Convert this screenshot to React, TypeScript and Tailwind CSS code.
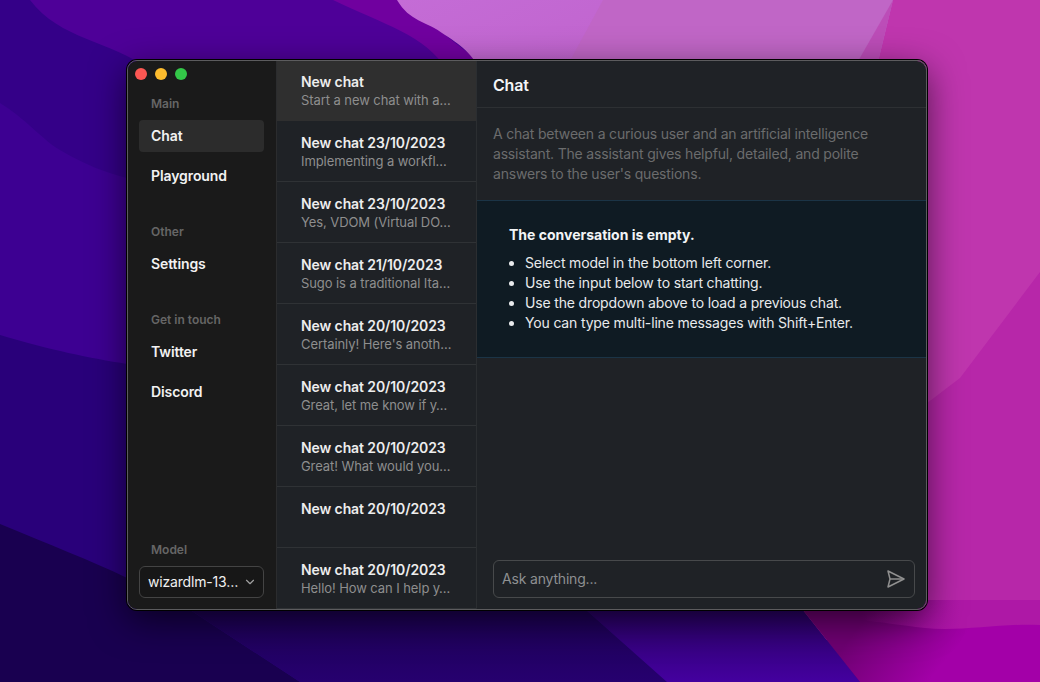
import { ChevronDown } from "lucide-react";

const chats = [
  { title: "New chat", sub: "Start a new chat with a…" },
  { title: "New chat 23/10/2023", sub: "Implementing a workfl…" },
  { title: "New chat 23/10/2023", sub: "Yes, VDOM (Virtual DO…" },
  { title: "New chat 21/10/2023", sub: "Sugo is a traditional Ita…" },
  { title: "New chat 20/10/2023", sub: "Certainly! Here's anoth…" },
  { title: "New chat 20/10/2023", sub: "Great, let me know if y…" },
  { title: "New chat 20/10/2023", sub: "Great! What would you…" },
  { title: "New chat 20/10/2023", sub: "" },
  { title: "New chat 20/10/2023", sub: "Hello! How can I help y…" },
];

const tips = [
  "Select model in the bottom left corner.",
  "Use the input below to start chatting.",
  "Use the dropdown above to load a previous chat.",
  "You can type multi-line messages with Shift+Enter.",
];

const Wallpaper = () => (
  <svg className="absolute inset-0 w-full h-full" viewBox="0 0 1040 682" preserveAspectRatio="none">
    <defs>
      <linearGradient id="pink" x1="0" y1="0" x2="1" y2="1">
        <stop offset="0" stopColor="#c46cd6" />
        <stop offset="1" stopColor="#b84fb8" />
      </linearGradient>
      <linearGradient id="bluebottom" x1="0" y1="0" x2="0" y2="1">
        <stop offset="0" stopColor="#1c0052" />
        <stop offset="1" stopColor="#26006f" />
      </linearGradient>
      <linearGradient id="violet" x1="0" y1="0" x2="0" y2="1">
        <stop offset="0" stopColor="#26005f" />
        <stop offset="1" stopColor="#44009f" />
      </linearGradient>
      <linearGradient id="corner" gradientUnits="userSpaceOnUse" x1="860" y1="625" x2="930" y2="680">
        <stop offset="0" stopColor="#6e0072" />
        <stop offset="1" stopColor="#a300a8" />
      </linearGradient>
      <linearGradient id="patch" gradientUnits="userSpaceOnUse" x1="860" y1="0" x2="960" y2="0">
        <stop offset="0" stopColor="#ae18a6" stopOpacity="0" />
        <stop offset="1" stopColor="#ae18a6" />
      </linearGradient>
    </defs>
    <rect width="1040" height="682" fill="#340088" />
    <path d="M0 0H1040V400H0V103C25 118 45 142 60 150C85 165 105 172 127 178C300 200 500 200 600 100L440 0Z" fill="#3d0092" />
    <path d="M30 0H500V70H150C110 40 60 40 30 0Z" fill="#4e0098" />
    <path d="M333 0H400L490 70H447C425 35 385 25 333 0Z" fill="#70009f" />
    <path d="M397 0C410 22 425 20 445 35C465 48 472 55 480 70V300H1040V0Z" fill="url(#pink)" />
    <path d="M603 0H893L875 70H565Z" fill="#c066c6" />
    <path d="M893 0H1040V640H860V70H876Z" fill="#bf36ae" />
    <path d="M893 0L853 70H876Z" fill="#bc4db8" />
    <path d="M1040 272L960 378L800 500V640H1040Z" fill="#b727a9" />
    <path d="M0 335C50 350 90 358 127 364H800V682H0Z" fill="#29007a" />
    <path d="M0 524C50 545 90 560 127 578L175 600L300 682H0Z" fill="#190050" />
    <path d="M175 600H575L667 682H300Z" fill="url(#bluebottom)" />
    <path d="M575 600H795L860 682H667Z" fill="url(#violet)" />
    <path d="M795 600H1040V682H860Z" fill="url(#corner)" />
    <path d="M860 600H1040V625C1000 623 960 632 925 628C900 625 880 622 860 620Z" fill="url(#patch)" />
  </svg>
);

const SectionTitle = ({ label }: { label: string }) => (
  <div className="h-4 pt-px px-3 mb-[9px] text-xs leading-4 font-semibold text-[#666666]">{label}</div>
);

const NavItem = ({ label, active }: { label: string; active?: boolean }) => (
  <div className={`h-8 px-3 rounded flex items-center text-sm font-semibold tracking-[-0.1px] text-[#f2f2f2] ${active ? "bg-[#2c2c2c]" : ""}`}>
    {label}
  </div>
);

const Sidebar = () => (
  <div className="w-[149px] shrink-0 flex flex-col bg-[#1a1a1a] border-r border-[#2b2c2e] pl-[11px] pr-3 pb-[11px]">
    <div className="h-[34px] flex items-start gap-2 pt-[7px] -ml-1">
      <div className="w-3 h-3 rounded-full bg-[#fc5753]" />
      <div className="w-3 h-3 rounded-full bg-[#fdbc2e]" />
      <div className="w-3 h-3 rounded-full bg-[#33c748]" />
    </div>
    <SectionTitle label="Main" />
    <div className="flex flex-col gap-2 mb-[31px]">
      <NavItem label="Chat" active />
      <NavItem label="Playground" />
    </div>
    <SectionTitle label="Other" />
    <div className="flex flex-col gap-2 mb-[31px]">
      <NavItem label="Settings" />
    </div>
    <SectionTitle label="Get in touch" />
    <div className="flex flex-col gap-2">
      <NavItem label="Twitter" />
      <NavItem label="Discord" />
    </div>
    <div className="mt-auto">
      <SectionTitle label="Model" />
      <div className="h-8 rounded-md border border-[#444444] bg-[#171717] flex items-center pl-2 pr-[6px] text-sm tracking-[-0.18px] text-[#f0f0f0]">
        <span className="flex-1 whitespace-nowrap">wizardlm-13…</span>
        <ChevronDown size={14} className="text-[#a0a0a0]" />
      </div>
    </div>
  </div>
);

const ChatList = () => (
  <div className="w-[200px] shrink-0 flex flex-col overflow-hidden bg-[#1f2226] border-r border-[#2b2e31]">
    {chats.map((c, i) => (
      <div
        key={i}
        className={i === 0
          ? "h-[60px] shrink-0 pl-6 pt-[11px] bg-[#2f2f2f]"
          : "h-[61px] shrink-0 pl-6 pt-3 border-b border-[#2f3235]"}
      >
        <div className="text-sm leading-5 font-semibold tracking-[-0.1px] text-[#ededed] whitespace-nowrap">{c.title}</div>
        <div className="text-[13px] leading-4 tracking-[-0.08px] text-[#8e8e8e] whitespace-nowrap">{c.sub}</div>
      </div>
    ))}
  </div>
);

const SendIcon = () => (
  <svg width="18" height="18" viewBox="0 0 18 18" fill="none" stroke="#8f8f8f" strokeWidth="1.5" strokeLinejoin="round">
    <path d="M1 1L17 9L1 17L3 9Z" />
    <path d="M3 9H17" />
  </svg>
);

const ChatPanel = () => (
  <div className="flex-1 flex flex-col min-w-0 bg-[#1f2226]">
    <div className="h-[47px] shrink-0 px-4 pt-[2px] flex items-center border-b border-[#2d3033] text-base font-semibold tracking-[-0.2px] text-[#f4f6f8]">
      Chat
    </div>
    <div className="h-[92px] shrink-0 px-4 pt-4 text-sm leading-5 tracking-[-0.19px] text-[#6b6c6d]">
      A chat between a curious user and an artificial intelligence assistant. The assistant gives helpful, detailed, and polite answers to the user's questions.
    </div>
    <div className="shrink-0 h-[158px] border-y border-[#1b3446] bg-[#0f1b23] px-8 pt-6 text-sm leading-5 tracking-[-0.16px] text-[#e8eaec]">
      <div className="font-bold tracking-normal text-[#f2f4f6] mb-2">The conversation is empty.</div>
      <ul className="list-disc pl-4">
        {tips.map(t => (
          <li key={t}>{t}</li>
        ))}
      </ul>
    </div>
    <div className="mt-auto pl-4 pr-[11px] pb-[11px]">
      <div className="h-[38px] rounded-md border border-[#47494b] flex items-center pl-2 pr-[9px] text-sm tracking-[-0.18px] text-[#8e9092]">
        <span className="flex-1">Ask anything...</span>
        <SendIcon />
      </div>
    </div>
  </div>
);

const App = () => {
  return (
    <div className="relative w-[1040px] h-[682px] overflow-hidden bg-[#340088] font-['Inter',sans-serif]">
      <Wallpaper />
      <div className="relative ml-[127px] pt-[60px]">
        <div className="w-[800px] h-[550px] flex overflow-hidden rounded-[10px] border border-[#5c5c5e] shadow-[0_0_0_1px_#000,0_10px_36px_rgba(0,0,0,0.6)]">
          <Sidebar />
          <ChatList />
          <ChatPanel />
        </div>
      </div>
    </div>
  );
};

export default App;
